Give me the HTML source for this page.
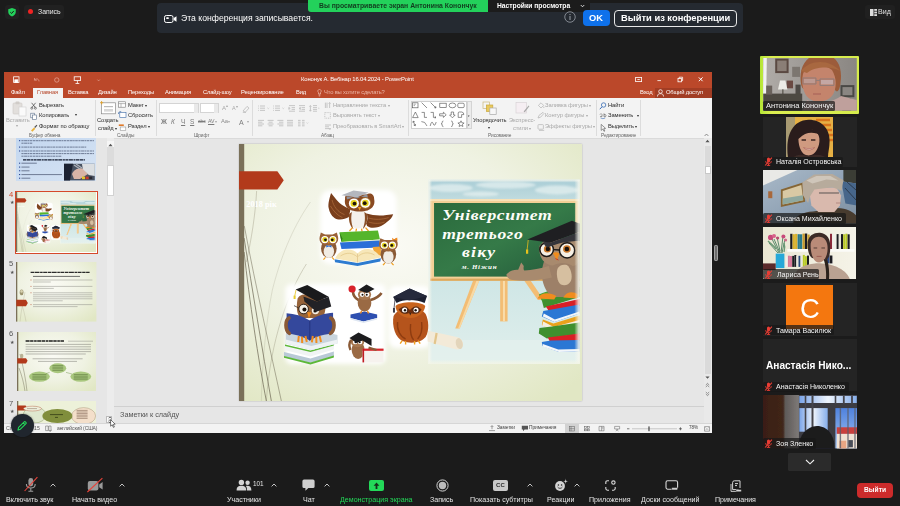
<!DOCTYPE html>
<html lang="ru">
<head>
<meta charset="utf-8">
<title>Zoom</title>
<style>
*{box-sizing:border-box;margin:0;padding:0}
html,body{width:900px;height:506px;overflow:hidden;background:#1b1b1b}
body{position:relative;font-family:"Liberation Sans",sans-serif;color:#fff}
.a{position:absolute}
.t{position:absolute;white-space:nowrap;line-height:1;will-change:transform}
/* zoom top */
#shield{left:5px;top:5px;width:14px;height:14px;border-radius:3px;background:#212121}
#rec{left:24px;top:5px;width:40.4px;height:14px;border-radius:3px;background:#212121}
#banner{left:157px;top:3px;width:586px;height:30px;border-radius:4px;background:#252a31}
#green{left:308px;top:0;width:180px;height:12px;background:#23d15b;border-radius:0 0 0 3px}
#sett{left:488px;top:0;width:102px;height:12px;background:#1c1c1c;border-radius:0 0 3px 0}
#ok{left:583px;top:10px;width:27px;height:16px;border-radius:4px;background:#0e71eb}
#leave{left:614px;top:10px;width:123px;height:16.5px;border-radius:4px;border:1px solid #e8e8e8}
/* ppt */
#ppt{left:4px;top:72px;width:708px;height:361px;background:#e6e6e6;overflow:hidden}
#ppt .t{color:#444}
#title{left:0;top:0;width:708px;height:26px;background:#bb482a}
#ribbon{left:0;top:26px;width:708px;height:40.6px;background:#f3f3f3;border-bottom:.8px solid #dadada}
#hometab{left:28.5px;top:15.5px;width:30px;height:11px;background:#f3f3f3}
.tab{top:18.3px;font-size:5.8px;color:#fff!important;letter-spacing:-.16px}
.rl{font-size:5.8px;color:#2c2c2c!important;letter-spacing:-.1px}
.rg{font-size:5.8px;color:#a8a8a8!important;letter-spacing:-.1px}
.gl{font-size:4.8px;color:#666!important;top:62.2px;letter-spacing:-.1px}
.sep{top:28px;width:1px;height:36px;background:#dcdcdc}
</style>
</head>
<body>
<svg width="0" height="0" style="position:absolute">
<defs>
<radialGradient id="sbg" cx="45%" cy="40%" r="75%"><stop offset="0" stop-color="#fafaf4"/><stop offset=".55" stop-color="#eff2e2"/><stop offset="1" stop-color="#e1e7c4"/></radialGradient>
<linearGradient id="sky" x1="0" y1="0" x2="0" y2="1"><stop offset="0" stop-color="#a9cdd6"/><stop offset=".12" stop-color="#c3dde0"/><stop offset=".55" stop-color="#cfe6e6"/><stop offset="1" stop-color="#e0efec"/></linearGradient>
<linearGradient id="brd" x1="0" y1="0" x2="1" y2="1"><stop offset="0" stop-color="#2a6a3c"/><stop offset=".5" stop-color="#357a48"/><stop offset="1" stop-color="#23583a"/></linearGradient>
<filter id="bl2" x="-20%" y="-20%" width="140%" height="140%"><feGaussianBlur stdDeviation="2.2"/></filter>
<filter id="bl1" x="-20%" y="-20%" width="140%" height="140%"><feGaussianBlur stdDeviation=".9"/></filter>
<symbol id="slide" viewBox="0 0 342.6 257" preserveAspectRatio="none">
<rect width="342.6" height="257" fill="url(#sbg)"/>
<g transform="translate(-238.7,-144)">
<!-- grass lines -->
<g fill="none" stroke="#9a977f" stroke-width=".5" opacity=".8">
<path d="M306 264 C288 292 270 340 266 401"/>
<path d="M310 202 C296 222 282 250 272 290 C266 320 262 360 261 401" opacity=".6"/>
<path d="M256.3 191 C255 215 251 240 246 262"/>
</g>
<g fill="none" stroke="#6a6450" stroke-width=".7">
<path d="M243.8 238 C252 290 262 350 271 401"/>
<path d="M243.8 252 C249 300 258 360 266 401"/>
<path d="M244 226 C256 290 270 350 281 401" stroke-width=".5"/>
</g>
<rect x="238.7" y="144" width="5.2" height="257" fill="#7a7059"/>
<path d="M238.7 171.2 H277 L283.4 180.3 L277 189.4 H238.7 Z" fill="#b23a1b"/>
<text x="246" y="207.4" font-family="Liberation Serif,serif" font-weight="bold" font-size="8.3" fill="#fff">2018 рік</text>
<!-- white halos -->
<g fill="#fff" filter="url(#bl2)">
<rect x="320" y="190" width="76" height="74" rx="10"/>
<rect x="285" y="284" width="100" height="80" rx="6"/>
<rect x="388" y="286" width="42" height="62" rx="8"/>
</g>
<!-- TOP OWL GROUP -->
<g>
<path d="M330.6 193 C329 198 327.4 204 328.2 208 C329 212 330.6 215.6 334 218 C338 220.6 344 219.6 348.4 217 L350 209 C344 207 338 203 334.6 198 Z" fill="#7a3f1c"/>
<path d="M331.6 200 C333 206 337 212 344 214.6 M330 206 C333 211 337 215.6 342 217.6" stroke="#a8683a" stroke-width=".8" fill="none"/>
<path d="M366 213.6 C372 215.6 380 216 386 215 L392.6 214.2 C391.6 217.4 389.6 219.6 387 221.6 C384 224 381.6 226 378 227 C374 228 370 228.4 366.6 226 L365 222 Z" fill="#7a3f1c"/>
<path d="M368 218 C374 220 382 219.6 388 217.6 M368 222 C374 224 380 223.6 384 222" stroke="#a8683a" stroke-width=".8" fill="none"/>
<ellipse cx="357.6" cy="218.4" rx="9.4" ry="10.2" fill="#f4f1ec"/>
<path d="M348.6 214 C347.6 222 350.6 227.6 353 229 C350.4 223 350.4 217 351.4 212 Z M366.6 214 C367.6 222 364.6 227.6 362.2 229 C364.8 223 364.8 217 363.8 212 Z" fill="#8a4f27"/>
<path d="M344.6 199 C344 194 349 192.4 352 194.6 L366 194.4 C369 192.2 374 193.8 373.6 199 C375 205 372 211.4 359.2 211.6 C346.4 211.4 343.4 205 344.6 199 Z" fill="#8a4a22"/>
<circle cx="353.4" cy="203.4" r="5" fill="#fff"/><circle cx="364.8" cy="203" r="5" fill="#fff"/>
<circle cx="353.4" cy="203.4" r="3.3" fill="#e6d21e"/><circle cx="364.8" cy="203" r="3.3" fill="#e6d21e"/>
<circle cx="354" cy="203.6" r="1.9" fill="#20150c"/><circle cx="364.2" cy="203.2" r="1.9" fill="#20150c"/>
<circle cx="364.8" cy="203" r="5.2" fill="none" stroke="#caa84a" stroke-width=".5"/>
<path d="M357.4 207 L360.8 207 L359.1 210.4 Z" fill="#f0a020"/>
<path d="M341 195.2 L353 190.4 L368 192.4 L356.4 197.6 Z" fill="#b4b7be"/><path d="M346 196.2 L356.4 198.4 L366.6 194 L367.4 197.4 C361 196 352 197 346.4 199.6 Z" fill="#8f929b"/>
<path d="M352 227.6 l-3 3.4 M356 228.6 l-.6 3 M361 228.6 l.6 3 M365 227.6 l3 3.4" stroke="#f0a020" stroke-width="1.3"/>
<path d="M339 232.2 L377.4 230.6 L379.4 239.4 L341 242 Z" fill="#55b52b"/><path d="M339 232.2 L341 242 L342 238.6 Z" fill="#2f7d17"/><path d="M341 242 L379.4 239.4 L379.4 240.8 L341.4 243.4 Z" fill="#e9f2d8"/>
<path d="M339.4 242.6 L379 240.6 L379.4 247.4 L341 249 Z" fill="#2b6fd8"/>
<path d="M372 247 L380.4 246.6 L380.4 256 L374 254 Z" fill="#f0a63a"/>
<path d="M334 259.2 L357 263 L380.4 258.2 L379.8 261.6 L357 266 L334.6 262.2 Z" fill="#2d7bd0"/>
<path d="M334.6 258.6 C340 247.2 352 247.8 357 253.6 C362 246.8 374 246.8 380.2 257.4 L357 262.6 Z" fill="#f7e7b9"/>
<path d="M357 253.6 L357 262.6" stroke="#d8b87a" stroke-width=".6"/>
<path d="M340 256 C346 252 352 252.6 356.4 256.6 M374 255 C368 251.6 362 252.4 357.6 256.4" fill="none" stroke="#e3c98a" stroke-width=".8"/>
<!-- left small owl -->
<ellipse cx="328.4" cy="248.6" rx="7.8" ry="9.4" fill="#8a5a36"/><ellipse cx="328.4" cy="251.4" rx="5.2" ry="6.6" fill="#f1ece4"/>
<path d="M319.2 237 L320.4 232.6 L324.6 234.4 L332.2 234.4 L336.4 232.6 L337.6 237 C338.6 242 335 245.8 328.4 245.8 C321.8 245.8 318.2 242 319.2 237 Z" fill="#9a6238"/>
<circle cx="324.4" cy="239.6" r="3.6" fill="#fff"/><circle cx="332.4" cy="239.6" r="3.6" fill="#fff"/>
<circle cx="324.4" cy="239.6" r="2.5" fill="#e6d21e"/><circle cx="332.4" cy="239.6" r="2.5" fill="#e6d21e"/>
<circle cx="325" cy="239.8" r="1.4" fill="#1e140c"/><circle cx="331.8" cy="239.8" r="1.4" fill="#1e140c"/>
<path d="M327.4 241.8 h2 l-1 2.2 z" fill="#f0a020"/><path d="M325.8 245 l2.6 1 l2.6 -1 v2.4 l-2.6 -1 l-2.6 1 z" fill="#2b6fd8"/>
<path d="M325 257.4 l-2 2.2 M331.6 257.4 l2 2.2" stroke="#f0a020" stroke-width="1.2"/>
<!-- right small owl -->
<ellipse cx="387.8" cy="254" rx="7.8" ry="9.6" fill="#8a5a36"/><ellipse cx="387.8" cy="257" rx="5.2" ry="6.6" fill="#f1ece4"/>
<path d="M378.6 242.6 L379.8 238.2 L384 240 L391.6 240 L395.8 238.2 L397 242.6 C398 247.6 394.4 251.4 387.8 251.4 C381.2 251.4 377.6 247.6 378.6 242.6 Z" fill="#9a6238"/>
<circle cx="383.8" cy="245.2" r="3.6" fill="#fff"/><circle cx="391.8" cy="245.2" r="3.6" fill="#fff"/>
<circle cx="383.8" cy="245.2" r="2.5" fill="#e6d21e"/><circle cx="391.8" cy="245.2" r="2.5" fill="#e6d21e"/>
<circle cx="384.4" cy="245.4" r="1.4" fill="#1e140c"/><circle cx="391.2" cy="245.4" r="1.4" fill="#1e140c"/>
<path d="M386.8 247.4 h2 l-1 2.2 z" fill="#f0a020"/><path d="M393.4 239.6 l3.2 -2.2 l.4 3.4 z M394 239.4 l-2.6 -1.6 l.6 2.6 z" fill="#f08a20"/>
<path d="M384.4 263 l-2 2.2 M391 263 l2 2.2" stroke="#f0a020" stroke-width="1.2"/>
</g>
<g>
<rect x="428" y="179.7" width="150.6" height="184" fill="url(#sky)"/>
<g fill="#e4f0f0" opacity=".75" filter="url(#bl1)"><ellipse cx="450" cy="188" rx="22" ry="4"/><ellipse cx="505" cy="185" rx="30" ry="3.4"/><ellipse cx="556" cy="190" rx="22" ry="4.4"/><ellipse cx="480" cy="194" rx="18" ry="2.6"/></g>
<rect x="428" y="340" width="150.6" height="24" fill="#e6f1ee" opacity=".6"/>
<!-- easel legs -->
<path d="M472.6 280 L478.8 280 L459 328.4 L454.6 328.4 Z" fill="#f3bd74"/><path d="M476 280 L478.8 280 L459 328.4 L457.4 328.4 Z" fill="#f8d9a4"/>
<rect x="499.4" y="280" width="7.4" height="41.4" fill="#f3bd74"/><rect x="502.2" y="280" width="2" height="41.4" fill="#f9dcaa"/>
<path d="M523 280 L529.4 280 L543 300 L537 300 Z" fill="#f3bd74"/>
<!-- board -->
<rect x="429.4" y="199" width="149.2" height="81.8" fill="#f2cf96"/><rect x="429.4" y="199" width="149.2" height="2" fill="#f8e2b8"/><rect x="429.4" y="278.6" width="149.2" height="2.2" fill="#dca85e"/>
<rect x="433.4" y="203" width="141" height="73.6" fill="url(#brd)"/>
<g font-family="Liberation Serif,serif" font-weight="bold" font-style="italic" fill="#fdfdf8">
<text transform="translate(441.6,220.4) scale(1.13,1)" font-size="15.6" textLength="96.8" lengthAdjust="spacing">Університет</text>
<text transform="translate(441.6,239) scale(1.13,1)" font-size="15.6" textLength="71.2" lengthAdjust="spacing">третього</text>
<text transform="translate(461.4,257) scale(1.13,1)" font-size="15.6" textLength="29.2" lengthAdjust="spacing">віку</text>
<text transform="translate(461,268.8) scale(1.13,1)" font-size="6.2" textLength="30.8" lengthAdjust="spacing">м. Ніжин</text>
</g>
<!-- book stack -->
<g>
<path d="M540.6 299 L578.6 289 L578.6 297 L543 308 Z" fill="#3f8f2e"/><path d="M538 294.4 C548 290 566 286.4 578.6 287 L578.6 292 L541 300.4 Z" fill="#4aa235"/>
<path d="M545 306.4 L578.6 299 L578.6 306 L548.6 312 Z" fill="#d81f26"/>
<path d="M542.4 311 L578.6 304.6 L578.6 313.4 L553.6 322 L541 316.4 Z" fill="#2b77d4"/><path d="M543 313.4 L554 319.4 L578.6 311.4 L578.6 313.4 L553.6 322 L542 316.6 Z" fill="#f3f6fa"/>
<path d="M542 319.4 L552.6 323.4 L578.6 315.4 L578.6 322.6 L553 330.6 L541 325 Z" fill="#e9a21c"/><path d="M542.4 321.6 L553 327 L578.6 320 L578.6 322.6 L553 330.6 L541.4 325.4 Z" fill="#f6efe0"/>
<path d="M538.6 328 L551 326.6 L578.6 322.6 L578.6 334 L546 338.6 L538 333.6 Z" fill="#3f8f2e"/>
<path d="M547 337.4 L578.6 333.4 L578.6 340.4 L550 343.6 Z" fill="#d81f26"/>
<path d="M541 342 L550 340.6 L578.6 340 L578.6 351.6 L558 352 L541.6 346 Z" fill="#2b77d4"/><path d="M542 344 L557.4 349.4 L578.6 349 L578.6 351.6 L558 352 L541.6 346.6 Z" fill="#f3f6fa"/>
</g>
<!-- teacher owl -->
<g>
<path d="M543 262 C539 274 541 288 551 297 L578.6 297 L578.6 250 C566 246 549 250 543 262 Z" fill="#9d8068"/>
<path d="M557 268 C555 272 556 282 560 284.6 C564 286 568 285 570 281 C572 276 570 268 566 265 C562 264 559 265 557 268 Z" fill="#d6bfa0"/>
<path d="M505.6 274.6 C508 271 513 269.4 517.4 269.8 L520.4 262.6 L523 266 C522.6 268 522.6 269.6 523.6 270.6 C531 270 540 268.6 548 266 L551 277.6 C540 280.6 524 281.6 512 280 C508 279.4 506 277.4 505.6 274.6 Z" fill="#a88a6e"/>
<path d="M538.6 246 C537.6 256 542 264.6 552 265.6 C558 262 566 262 572 266 C576 266 578.6 262 578.6 256 L578.6 240 L546 238 Z" fill="#a88a6e"/>
<circle cx="545.8" cy="249.6" r="6.6" fill="#f6efe4"/><circle cx="566.2" cy="250.4" r="7.4" fill="#f6efe4"/>
<circle cx="546.6" cy="249" r="3.6" fill="#c8762a"/><circle cx="566" cy="249" r="3.8" fill="#c8762a"/>
<circle cx="547" cy="249" r="2.2" fill="#1a120c"/><circle cx="566" cy="249" r="2.3" fill="#1a120c"/>
<circle cx="545.8" cy="249.6" r="6.8" fill="none" stroke="#1e1a18" stroke-width="1.5"/><circle cx="566.2" cy="250.4" r="7.6" fill="none" stroke="#1e1a18" stroke-width="1.5"/>
<path d="M552.6 249.6 L558.6 250" stroke="#1e1a18" stroke-width="1.3"/>
<path d="M552 253 C554 251.6 557.4 252 558.6 253.6 L556 260.6 Z" fill="#f08c1e"/>
<path d="M554.6 258.6 l3 1.4" stroke="#c8281e" stroke-width=".8"/>
<path d="M526.6 239.6 L571 220.8 L578.6 223.4 L578.6 232 L549.4 242.8 Z" fill="#1f1f22"/><path d="M542.6 241.4 L549.4 242.8 L578.6 232 L578.6 241 C568 241 556 243 547 247.6 C544 246 542.6 244 542.6 241.4 Z" fill="#34343a"/>
<path d="M527.4 240 L526.2 251" stroke="#e4b91c" stroke-width=".8"/><path d="M525.2 249.6 h2.2 v4.2 h-2.2 z" fill="#e8c21c"/>
<path d="M536.6 298.6 C539.6 292.6 548 291.6 555.4 296 L553.4 299.4 Z M562.4 297.6 C565.4 291.6 572.4 291 577 294.6 L576 298.6 Z" fill="#f08c1e"/>
</g>
<linearGradient id="rfade" x1="0" y1="0" x2="1" y2="0"><stop offset="0" stop-color="#f6f7ee" stop-opacity="0"/><stop offset="1" stop-color="#f6f7ee" stop-opacity="1"/></linearGradient>
<rect x="573.4" y="179.7" width="5.4" height="184" fill="url(#rfade)"/>
<linearGradient id="lfade" x1="1" y1="0" x2="0" y2="0"><stop offset="0" stop-color="#f6f7ee" stop-opacity="0"/><stop offset="1" stop-color="#f6f7ee" stop-opacity="1"/></linearGradient>
<linearGradient id="tfade" x1="0" y1="1" x2="0" y2="0"><stop offset="0" stop-color="#f6f7ee" stop-opacity="0"/><stop offset="1" stop-color="#f6f7ee" stop-opacity="1"/></linearGradient>
<linearGradient id="bfade" x1="0" y1="0" x2="0" y2="1"><stop offset="0" stop-color="#f3f5e6" stop-opacity="0"/><stop offset="1" stop-color="#f3f5e6" stop-opacity="1"/></linearGradient>
<rect x="427.8" y="179.5" width="3.6" height="184.4" fill="url(#lfade)"/>
<rect x="427.8" y="179.5" width="151" height="3.2" fill="url(#tfade)"/>
<rect x="427.8" y="359.6" width="151" height="4.3" fill="url(#bfade)"/>
<!-- scroll -->
<g><path d="M426.6 330.4 L456 337 C461 338 463 342 462 346 C461 349 457 350 454 349 L427 341.6 Z" fill="#f3ead8"/><ellipse cx="458.6" cy="343.6" rx="3.4" ry="5.6" transform="rotate(-14 458.6 343.6)" fill="#e3d5bb"/><path d="M436 333 L434 344" stroke="#e2c58c" stroke-width="2.2"/></g>
</g>
<!--OWLS2-->
<g>
<!-- reading owl -->
<path d="M283.6 352 L310 358.6 L333.4 351.6 L333.4 356 L310 363 L283.6 356.4 Z" fill="#b9c9d6"/><path d="M283.6 356 L310 362.6 L333.4 355.6 L333.4 357.4 L310 364.4 L283.6 357.8 Z" fill="#5cb838"/>
<path d="M284.6 345.6 L310 351.6 L333.4 345 L333.4 349.6 L310 356.4 L284.6 350.2 Z" fill="#f1f4f4"/><path d="M284.6 344.4 L310 350.4 L333.4 343.8 L333.4 345.4 L310 352 L284.6 346 Z" fill="#5cb838"/>
<path d="M285.4 334 L312 329 L337 335 L337 343.6 L311 350 L285.4 343.4 Z" fill="#c9d5dd"/><path d="M285.4 339.6 L311 346 L337 339.6 L337 343.6 L311 350 L285.4 343.4 Z" fill="#eef2f4"/>
<path d="M297 300 C297 296 302 294 308 294 L322 298 C326 302 326 312 322 318 L300 318 C296 314 296 306 297 300 Z" fill="#96633a"/>
<circle cx="303.2" cy="309" r="4.6" fill="#f4efe6"/><circle cx="304" cy="309.4" r="2" fill="#1a120c"/>
<circle cx="303.2" cy="309" r="4.8" fill="none" stroke="#2a2018" stroke-width=".9"/><path d="M298.4 308 L293.6 305.6" stroke="#2a2018" stroke-width=".7"/>
<circle cx="315" cy="310.6" r="3.6" fill="#f4efe6"/><circle cx="314.6" cy="311" r="1.6" fill="#1a120c"/>
<path d="M306.8 312 L311 312.6 L308.4 318.4 Z" fill="#f08c1e"/>
<path d="M286.2 313.2 C294 313.6 302 316 309.4 320.6 C316 315.6 325 313.2 332.6 312.8 L332.6 333.6 C325 334 316 336.4 309.4 340.6 C302 336.4 294 334 286.2 333.6 Z" fill="#34489c"/>
<path d="M309.4 320.6 L309.4 340.6" stroke="#22327a" stroke-width=".9"/>
<path d="M288.6 318 C284.6 320 284.4 330 289 333.4 M330.2 318 C334.6 320 334.8 330 330 333.4" stroke="#8a5a36" stroke-width="3.6" fill="none" stroke-linecap="round"/>
<path d="M295.2 289.6 L306.8 285 L328.2 296.8 L316.6 301.6 Z" fill="#1a1a1c"/><path d="M303 296.4 L316.6 301.6 L328.2 296.8 L330.8 306.4 L315.8 311.8 L304 301.6 Z" fill="#222226"/>
<path d="M295.6 290 L294.2 296.6" stroke="#e4c21c" stroke-width=".8"/><rect x="293.2" y="295.6" width="2" height="3.4" fill="#e8cc2a"/>
<path d="M298.4 336 l-.6 6 M301.6 336.6 l.2 6.4 M305 336 l1.4 6 M312.4 336 l-1 6.4 M315.8 336.6 l.2 6.4 M319.2 336 l1.4 6" stroke="#f08c1e" stroke-width="2"/>
<!-- apple owl -->
<path d="M350 314.6 L364 311.6 L376.6 314.6 L376.6 318 L363 321.6 L350 318 Z" fill="#2d4fb0"/><path d="M350 318 L363 321.6 L376.6 318 L376.6 319.4 L363 323 L350 319.4 Z" fill="#dfe7f2"/>
<ellipse cx="364" cy="303" rx="6.8" ry="8.6" fill="#9a6a44"/><ellipse cx="364" cy="294.6" rx="6.6" ry="5.4" fill="#a87850"/>
<path d="M358 300 C354 298 352.6 294 352.4 291.4 M370 300 C375 298.6 379 296 381 293" stroke="#8a5a36" stroke-width="2.6" fill="none"/>
<circle cx="361.6" cy="294.6" r="2.3" fill="#fff"/><circle cx="366.6" cy="294.6" r="2.3" fill="#fff"/><circle cx="362" cy="294.8" r="1" fill="#1a120c"/><circle cx="366.2" cy="294.8" r="1" fill="#1a120c"/>
<path d="M357.6 290 L366 284.6 L374 289 L366.4 293 Z" fill="#1c1c1e"/>
<circle cx="351.6" cy="289" r="3.6" fill="#d8222a"/>
<path d="M361 311 l-1 2.4 M367 311 l1 2.4" stroke="#f08c1e" stroke-width="1.4"/>
<!-- writing owl -->
<ellipse cx="357.6" cy="350" rx="6.4" ry="9" fill="#9a6a44"/><ellipse cx="357" cy="341.6" rx="6.8" ry="5.6" fill="#a87850"/>
<circle cx="354.6" cy="342" r="2.3" fill="#fff"/><circle cx="359.6" cy="342" r="2.3" fill="#fff"/><circle cx="355" cy="342.2" r="1" fill="#1a120c"/><circle cx="359.2" cy="342.2" r="1" fill="#1a120c"/>
<path d="M349 338 L358 332.4 L371 339 L371 346 L362 340.6 L356 343 Z" fill="#1c1c1e"/>
<path d="M350.6 340 C348.6 343 348.6 347 350 350" stroke="#8a5a36" stroke-width="2.4" fill="none"/>
<rect x="362" y="349" width="21" height="13.4" fill="#f6f2ee"/><rect x="362" y="348.6" width="21" height="2.2" fill="#d8222a"/><rect x="362" y="349" width="1.6" height="13.4" fill="#c01c22"/>
<path d="M368 347.6 L376 350" stroke="#8a5a36" stroke-width="2.2"/>
<!-- fluffy owl -->
<path d="M393 316 C391 326 395 338 402 341 C410 344 420 343 425 337 C429 330 428 320 425 314 C420 306 398 306 393 316 Z" fill="#b5541c"/>
<path d="M397 322 C396 330 400 337 405 339 M410 324 C409 332 411 338 413 340 M421 322 C422 330 420 336 417 339" stroke="#8e3c10" stroke-width="1.4" fill="none"/>
<path d="M395 306 C395 312 401 318 410 318 C418 318 424 312 424.6 306 C420 301 400 301 395 306 Z" fill="#c8641e"/>
<path d="M398 309.6 C401 306 406 306 409.4 310 C412 306 418 306 421 309.6 C419 314 412 315 409.6 312.6 C406 315 400 314 398 309.6 Z" fill="#6e2c0c"/>
<circle cx="404" cy="310" r="2.6" fill="#fff"/><circle cx="415.4" cy="310" r="2.6" fill="#fff"/><circle cx="404.4" cy="310.2" r="1.2" fill="#1a120c"/><circle cx="415" cy="310.2" r="1.2" fill="#1a120c"/>
<circle cx="404" cy="310" r="3.4" fill="none" stroke="#3a2a20" stroke-width=".6"/><circle cx="415.4" cy="310" r="3.4" fill="none" stroke="#3a2a20" stroke-width=".6"/>
<path d="M408.4 312.6 h2.6 l-1.3 3 z" fill="#3a2418"/>
<path d="M392.6 297 L409 288.6 L426.4 296 L424 303 C416 299 402 299 396 303 Z" fill="#1c2030"/><path d="M392.6 297 L409 300.6 L426.4 296 L409 288.6 Z" fill="#262a3c"/>
<path d="M394.6 297.6 L393.4 309" stroke="#3a3a48" stroke-width=".8"/><rect x="392.4" y="308" width="2" height="4.6" fill="#3a3a48"/>
<path d="M401.6 340.6 l-2 3 M405 341 l0 3.4 M414 341 l0 3.4 M417.6 340.6 l2 3" stroke="#f0a020" stroke-width="1.4"/>
</g>
</g>
</symbol>
</defs>
</svg>
<!-- ZOOM TOP BAR -->
<div class="a" id="shield"></div>
<svg class="a" style="left:8px;top:8px" width="8" height="8.5" viewBox="0 0 16 17"><path d="M8 0 L15.5 2.6 V8 C15.5 12.5 12 15.6 8 17 C4 15.6 .5 12.5 .5 8 V2.6 Z" fill="#23d15b"/><path d="M4.6 8.4 L7.2 10.9 L11.6 5.9" fill="none" stroke="#1b1b1b" stroke-width="2"/></svg>
<div class="a" id="rec"></div>
<div class="a" style="left:28.1px;top:9.3px;width:5.1px;height:5.1px;border-radius:50%;background:#f02323"></div>
<div class="t" style="left:37.5px;top:8.5px;font-size:6.9px;color:#e8e8e8">Запись</div>

<div class="a" id="banner"></div>
<svg class="a" style="left:164px;top:14.5px" width="13" height="8" viewBox="0 0 26 16"><rect x="1" y="1" width="17" height="14" rx="3.5" fill="none" stroke="#fff" stroke-width="2"/><path d="M19.5 6 L25 2.5 V13.5 L19.5 10 Z" fill="#fff"/><rect x="4.5" y="4.5" width="5" height="3.4" rx="1" fill="#fff"/></svg>
<div class="t" style="left:180.5px;top:13.9px;font-size:8.66px;color:#fff">Эта конференция записывается.</div>
<div class="a" id="green"></div>
<div class="t" style="left:318.5px;top:2.9px;font-size:6.83px;font-weight:bold;color:#123b1e">Вы просматриваете экран Антонина Конончук</div>
<div class="a" id="sett"></div>
<div class="t" style="left:496.5px;top:2.9px;font-size:6.73px;font-weight:bold;color:#fff">Настройки просмотра</div>
<svg class="a" style="left:580px;top:4.2px" width="5" height="4" viewBox="0 0 10 8"><path d="M1.5 2 L5 5.6 L8.5 2" fill="none" stroke="#fff" stroke-width="1.6"/></svg>
<svg class="a" style="left:564px;top:11.3px" width="12" height="12" viewBox="0 0 24 24"><circle cx="12" cy="12" r="10.5" fill="none" stroke="#9aa0a8" stroke-width="1.6"/><rect x="11" y="10" width="2" height="8" fill="#9aa0a8"/><rect x="11" y="6" width="2" height="2.2" fill="#9aa0a8"/></svg>
<div class="a" id="ok"></div>
<div class="t" style="left:589px;top:14.4px;font-size:9.3px;font-weight:bold;color:#fff">OK</div>
<div class="a" id="leave"></div>
<div class="t" style="left:620.5px;top:14.3px;font-size:9.36px;font-weight:bold;color:#fff">Выйти из конференции</div>
<div class="a" style="left:865px;top:4.6px;width:30px;height:14px;border-radius:3px;background:#202020"></div><svg class="a" style="left:870px;top:8.5px" width="7" height="7" viewBox="0 0 14 14"><rect x="0" y="0" width="7" height="14" fill="#ddd"/><rect x="8.5" y="0" width="5.5" height="3.6" fill="#ddd"/><rect x="8.5" y="5.2" width="5.5" height="3.6" fill="#ddd"/><rect x="8.5" y="10.4" width="5.5" height="3.6" fill="#ddd"/></svg>
<div class="t" style="left:878.3px;top:8.5px;font-size:7.1px;color:#e0e0e0">Вид</div>

<!-- POWERPOINT WINDOW -->
<div class="a" id="ppt">
<div class="a" id="title"></div>
<div class="a" id="hometab"></div>
<div class="a" id="ribbon"></div>
<!--TABS-->
<svg class="a" style="left:9px;top:3.5px" width="100" height="9" viewBox="0 0 100 9">
<g fill="none" stroke="#fff" stroke-width=".8"><rect x=".6" y=".8" width="5.4" height="5.6"/><rect x="1.8" y="3.8" width="3" height="2.6" fill="#fff"/></g>
<path d="M21.5 4.2 C23 2.2 26 2.6 26 5.4 M21.5 4.2 L21.5 2 M21.5 4.2 L23.8 4.2" fill="none" stroke="#e2a090" stroke-width=".8"/>
<circle cx="43.8" cy="4" r="2.2" fill="none" stroke="#e2a090" stroke-width=".8"/>
<g fill="none" stroke="#fff" stroke-width=".8"><rect x="61.2" y=".8" width="6.4" height="3.6"/><path d="M64.4 4.4 V7.5 M62.5 7.5 H66.3"/></g>
<path d="M84.4 3.6 L85.6 4.9 L86.8 3.6" fill="none" stroke="#e7b3a5" stroke-width=".6"/>
</svg>
<div class="t" style="left:296.8px;top:5.2px;font-size:5.9px;color:#fff!important;letter-spacing:-.15px">Кононук А. Вебінар 16.04.2024 - PowerPoint</div>
<svg class="a" style="left:630px;top:3px" width="74" height="10" viewBox="0 0 74 10">
<g fill="none" stroke="#fff" stroke-width=".8"><rect x="1.6" y="2.4" width="6" height="4.2"/><path d="M3.4 4.5 H5.8"/><path d="M23.4 5.6 H27"/><rect x="44" y="3.4" width="3.4" height="3.4"/><path d="M45.2 3.4 V2.2 H48.6 V5.6 H47.4"/><path d="M64.8 2.4 L68.6 6.2 M68.6 2.4 L64.8 6.2" stroke-width="1"/></g>
</svg>
<div class="t tab" style="left:6.8px">Файл</div>
<div class="t tab" style="left:33.3px;color:#b7472a!important">Главная</div>
<div class="t tab" style="left:64px">Вставка</div>
<div class="t tab" style="left:94px">Дизайн</div>
<div class="t tab" style="left:124px">Переходы</div>
<div class="t tab" style="left:161px">Анимация</div>
<div class="t tab" style="left:198.7px">Слайд-шоу</div>
<div class="t tab" style="left:237px">Рецензирование</div>
<div class="t tab" style="left:292px">Вид</div>
<svg class="a" style="left:312.5px;top:16.5px" width="5" height="8" viewBox="0 0 10 16"><path d="M5 1 C1.6 1 .6 4.6 3 7.4 V10 H7 V7.4 C9.4 4.6 8.4 1 5 1 Z M3.2 12 H6.8 M3.6 14 H6.4" fill="none" stroke="#f3c9bd" stroke-width="1.3"/></svg>
<div class="t tab" style="left:320px;color:#eab5a6!important">Что вы хотите сделать?</div>
<div class="a" style="left:651px;top:15.5px;width:57px;height:10.5px;background:#a23d24"></div>
<div class="t tab" style="left:636px">Вход</div>
<svg class="a" style="left:653px;top:16.8px" width="7" height="8" viewBox="0 0 14 16"><circle cx="7" cy="5" r="3.6" fill="none" stroke="#fff" stroke-width="1.5"/><path d="M1 15 C1 10 4 9.4 7 9.4 C10 9.4 13 10 13 15" fill="none" stroke="#fff" stroke-width="1.5"/></svg>
<div class="t tab" style="left:662px">Общий доступ</div>
<!--RIBBON-->
<!-- clipboard -->
<svg class="a" style="left:7px;top:28px" width="18" height="17" viewBox="0 0 18 17"><rect x="2" y="3" width="9" height="11" rx="1" fill="#e2dfdc" stroke="#cfcac6" stroke-width=".6"/><rect x="4.5" y="1.6" width="4" height="2.6" rx=".8" fill="#d0ccc8"/><rect x="8" y="7" width="7" height="9" fill="#fafafa" stroke="#d0d0d0" stroke-width=".6"/></svg>
<div class="t rg" style="left:2.2px;top:46px">Вставить</div>
<div class="t rg" style="left:11.5px;top:52px;font-size:4px">▾</div>
<svg class="a" style="left:25.6px;top:29.5px" width="8" height="36" viewBox="0 0 8 36">
<path d="M1.6 .8 L5.4 5.6 M5.6 .8 L1.8 5.6" stroke="#444" stroke-width=".7" fill="none"/><circle cx="1.8" cy="6.2" r="1" fill="none" stroke="#444" stroke-width=".6"/><circle cx="5.4" cy="6.2" r="1" fill="none" stroke="#444" stroke-width=".6"/>
<rect x=".8" y="11.2" width="3.8" height="4.6" fill="#fff" stroke="#5a6f8a" stroke-width=".6"/><rect x="2.6" y="13" width="3.8" height="4.6" fill="#fff" stroke="#5a6f8a" stroke-width=".6"/>
<g transform="translate(0,1.4)"><path d="M1 27 L4 24 L5.4 25.4 L2.4 28.4 Z" fill="#e9b23c"/><path d="M4.2 23.6 L6.6 21.4 L7.4 22.2 L5.2 24.6 Z" fill="#555"/></g>
</svg>
<div class="t rl" style="left:34.8px;top:30.7px">Вырезать</div>
<div class="t rl" style="left:34.8px;top:40.6px">Копировать</div>
<div class="t rl" style="left:70.5px;top:41.4px;font-size:4px">▾</div>
<div class="t rl" style="left:34.8px;top:51.9px">Формат по образцу</div>
<div class="t gl" style="left:24.8px">Буфер обмена</div>
<div class="a sep" style="left:90.6px"></div>
<!-- slides -->
<svg class="a" style="left:95.5px;top:28.5px" width="17" height="14" viewBox="0 0 17 14"><rect x="1.5" y="1.8" width="14" height="11" fill="#fff" stroke="#8a8a8a" stroke-width=".7"/><rect x="4" y="5" width="9" height="1.2" fill="#bbb"/><rect x="4" y="8" width="9" height="2.6" fill="#d8d8d8"/><path d="M1.6 0 V3.4 M0 1.7 H3.3" stroke="#e0a22a" stroke-width=".9"/></svg>
<div class="t rl" style="left:92.6px;top:46px">Создать</div>
<div class="t rl" style="left:94.4px;top:53.6px">слайд <span style="font-size:4px">▾</span></div>
<svg class="a" style="left:114.2px;top:29px" width="9" height="34" viewBox="0 0 9 34">
<rect x=".6" y=".8" width="7" height="5.4" fill="#fff" stroke="#777" stroke-width=".6"/><path d="M.6 2.6 H7.6 M3 2.6 V6.2" stroke="#777" stroke-width=".5"/>
<rect x="1.8" y="11.6" width="6.2" height="4.8" fill="#fff" stroke="#3c6aa8" stroke-width=".6"/><path d="M.4 13 C.4 11 1.6 10.4 3.2 10.6" stroke="#3c6aa8" stroke-width=".7" fill="none"/>
<g transform="translate(0,1.4)"><rect x=".8" y="22" width="5" height="1.6" fill="#e07a2a"/><rect x="2.2" y="24.6" width="5.6" height="3.6" fill="#fff" stroke="#888" stroke-width=".5"/></g>
</svg>
<div class="t rl" style="left:123.6px;top:30.7px">Макет <span style="font-size:4px">▾</span></div>
<div class="t rl" style="left:123.6px;top:40.6px">Сбросить</div>
<div class="t rl" style="left:123.6px;top:51.9px">Раздел <span style="font-size:4px">▾</span></div>
<div class="t gl" style="left:112.8px">Слайды</div>
<div class="a sep" style="left:152px"></div>
<!-- font -->
<div class="a" style="left:154.6px;top:31.4px;width:40.4px;height:9.8px;background:#fff;border:.6px solid #d4d4d4"></div>
<div class="a" style="left:190px;top:32px;width:4.4px;height:8.6px;background:#e9e9e9"></div>
<div class="a" style="left:196px;top:31.4px;width:19px;height:9.8px;background:#fff;border:.6px solid #d4d4d4"></div>
<div class="a" style="left:210px;top:32px;width:4.4px;height:8.6px;background:#e9e9e9"></div>
<div class="t rg" style="left:218px;top:33.4px;font-size:6px">A<span style="font-size:3.6px;vertical-align:top">▴</span></div>
<div class="t rg" style="left:228px;top:34px;font-size:5.4px">A<span style="font-size:3.6px;vertical-align:top">▾</span></div>
<div class="t rg" style="left:156.8px;top:47px;font-size:6.5px;color:#7c7c7c!important;font-weight:bold">Ж</div>
<div class="t rg" style="left:167px;top:47px;font-size:6.5px;color:#7c7c7c!important;font-style:italic">К</div>
<div class="t rg" style="left:176.6px;top:47px;font-size:6.5px;color:#7c7c7c!important;text-decoration:underline">Ч</div>
<div class="t rg" style="left:186px;top:47px;font-size:6.5px;color:#7c7c7c!important;text-decoration:underline">S</div>
<div class="t rg" style="left:193.6px;top:48.4px;font-size:4.8px;color:#7c7c7c!important;text-decoration:line-through">abc</div>
<div class="t rg" style="left:203.6px;top:47.4px;font-size:5.2px;color:#7c7c7c!important;text-decoration:underline">AV</div>
<div class="t rg" style="left:211.4px;top:48.6px;font-size:3.6px">▾</div>
<div class="t rg" style="left:216.6px;top:47.2px;font-size:5.8px;color:#8c8c8c!important">Aa</div>
<div class="t rg" style="left:224.4px;top:48.6px;font-size:3.6px">▾</div>
<div class="t rg" style="left:234.6px;top:46.6px;font-size:7px;color:#7c7c7c!important">A</div>
<div class="t rg" style="left:243px;top:48.6px;font-size:3.6px">▾</div>
<svg class="a" style="left:238px;top:33px" width="8" height="8" viewBox="0 0 8 8"><path d="M1 6 L5 1.4 L7 3 L3.4 7.2 Z M.8 7.4 H4" fill="none" stroke="#b5b5b5" stroke-width=".7"/></svg>
<div class="t gl" style="left:189.6px">Шрифт</div>
<div class="a sep" style="left:248px"></div>
<!-- paragraph -->
<svg class="a" style="left:252px;top:31px" width="64" height="26" viewBox="0 0 64 26" fill="none" stroke="#b3b3b3" stroke-width=".7">
<path d="M4 3 H9 M4 5.2 H9 M4 7.4 H9 M2 3 h.8 M2 5.2 h.8 M2 7.4 h.8"/><path d="M11.4 4.8 l.9 .9 l.9 -.9" stroke-width=".5"/>
<path d="M19 3 H24 M19 5.2 H24 M19 7.4 H24 M17 3 h.8 M17 5.2 h.8 M17 7.4 h.8"/><path d="M26.4 4.8 l.9 .9 l.9 -.9" stroke-width=".5"/>
<path d="M33 2.6 H39 M35.6 4.6 H39 M35.6 6.4 H39 M33 8.2 H39 M32.8 4.4 l1.4 1 l-1.4 1 z"/>
<path d="M43 2.6 H49 M45.6 4.6 H49 M45.6 6.4 H49 M43 8.2 H49 M44.4 4.4 l-1.4 1 l1.4 1 z"/>
<path d="M57 2.6 H61 M57 4.6 H61 M57 6.4 H61 M57 8.2 H61 M54.4 2.6 V8.2 M53.4 3.6 l1 -1 l1 1 M53.4 7.2 l1 1 l1 -1"/><path d="M62.2 4.8 l.8 .8 l.8 -.8" stroke-width=".5"/>
<path d="M2 17.4 H8 M2 19.2 H6.4 M2 21 H8 M2 22.8 H6.4"/>
<path d="M11.6 17.4 H17.6 M12.6 19.2 H16.6 M11.6 21 H17.6 M12.6 22.8 H16.6"/>
<path d="M21.4 17.4 H27.4 M23 19.2 H27.4 M21.4 21 H27.4 M23 22.8 H27.4"/>
<path d="M31 17.4 H37 M31 19.2 H37 M31 21 H37 M31 22.8 H37"/>
<path d="M42 17.4 H44.6 M42 19.2 H44.6 M42 21 H44.6 M42 22.8 H44.6 M46 17.4 H48.6 M46 19.2 H48.6 M46 21 H48.6 M46 22.8 H48.6"/><path d="M50.6 19.6 l.8 .8 l.8 -.8" stroke-width=".5"/>
</svg>
<svg class="a" style="left:320px;top:29.5px" width="8" height="32" viewBox="0 0 8 32" fill="none" stroke="#b3b3b3" stroke-width=".7"><path d="M1.4 .6 V6 M3 .6 V6 M5.6 .6 V6 M4.6 1.6 l1 -1 l1 1"/><rect x=".8" y="10.6" width="5.6" height="5.6" stroke-dasharray="1 .8"/><g transform="translate(0,1.4)"><path d="M1 21.6 H7 M1 23.4 H5 M1 25.2 H7 M5 25.2 l1.4 1.4"/></g></svg>
<div class="t rg" style="left:329.4px;top:30.7px">Направление текста <span style="font-size:4px">▾</span></div>
<div class="t rg" style="left:329.4px;top:40.6px">Выровнять текст <span style="font-size:4px">▾</span></div>
<div class="t rg" style="left:329.4px;top:51.9px">Преобразовать в SmartArt <span style="font-size:4px">▾</span></div>
<div class="t gl" style="left:317px">Абзац</div>
<div class="a sep" style="left:404px"></div>
<!-- drawing -->
<div class="a" style="left:406.6px;top:28.6px;width:56px;height:28.2px;background:#fff;border:.6px solid #cfcfcf"></div>
<div class="a" style="left:462.6px;top:28.6px;width:5.4px;height:28.2px;background:#ececec;border:.6px solid #d4d4d4"></div>
<svg class="a" style="left:407px;top:29px" width="56" height="28" viewBox="0 0 56 28" fill="none" stroke="#555" stroke-width=".65">
<rect x="1.6" y="1.8" width="5.4" height="5"/><path d="M2.6 3.2 h2.2 M2.6 4.6 h1.4" stroke-width=".5"/>
<path d="M10.6 1.6 L16 7"/><path d="M19.6 1.6 L25 7 M25 7 l-1.8 -.4 M25 7 l-.4 -1.8"/>
<rect x="28.8" y="2.2" width="6.4" height="4.4"/><ellipse cx="41.4" cy="4.4" rx="3.4" ry="2.4"/><rect x="46.8" y="2.2" width="6.4" height="4.4" rx="1.2"/>
<path d="M1.6 16.6 L4.4 11 L7.2 16.6 Z"/><path d="M10.6 11.4 H13.4 V16.4 H16"/><path d="M19.6 11.4 H22.4 V16.4 H25 m0 0 l-1.2 -1 m1.2 1 l-1.2 1"/>
<path d="M28.6 12.8 H32.4 V11.2 L35.2 13.8 L32.4 16.4 V14.8 H28.6 Z"/><path d="M40.2 11 V14 H38.6 L41.4 16.8 L44.2 14 H42.6 V11 Z"/><path d="M47.2 16.4 V12 Q47.2 11 48.4 11 H50.8 Q53 11.4 52.8 13.6 H50.6 V16.4 Z"/>
<path d="M2.2 20.2 l2 4.6 m0 0 l-1.6 -.8 m1.6 .8 l.4 -1.8 M2.2 20.2 l1.6 .6 M2.2 20.2 l-.2 1.6"/><path d="M10.4 20.6 Q14 20 16 25"/><path d="M19.2 25 Q20.6 19 22.2 22.6 Q23.6 26.6 25.2 21"/>
<path d="M32.4 20 Q31 20 31.2 21.4 Q31.4 22.6 30.2 22.8 Q31.4 23 31.2 24.2 Q31 25.6 32.4 25.6"/><path d="M40.2 20 Q41.6 20 41.4 21.4 Q41.2 22.6 42.4 22.8 Q41.2 23 41.4 24.2 Q41.6 25.6 40.2 25.6"/>
<path d="M50 19.8 l.9 2 l2.2 .2 l-1.7 1.4 l.5 2.1 l-1.9 -1.1 l-1.9 1.1 l.5 -2.1 l-1.7 -1.4 l2.2 -.2 z"/>
</svg>
<div class="t rl" style="left:463.8px;top:42.6px;font-size:3.4px">▾</div>
<div class="t rl" style="left:463.8px;top:51.6px;font-size:3.4px">▾</div>
<svg class="a" style="left:478.4px;top:28.6px" width="15" height="14" viewBox="0 0 15 14"><rect x="1" y="1" width="6.4" height="6.4" fill="#f4f4f4" stroke="#c9b77a" stroke-width=".7"/><rect x="4.4" y="4" width="6.4" height="6.4" fill="#e9c95c" stroke="#c8a73c" stroke-width=".7"/><rect x="7.8" y="7" width="6.4" height="6.4" fill="#f7f7f7" stroke="#a9a9a9" stroke-width=".7"/></svg>
<div class="t rl" style="left:468.6px;top:46px">Упорядочить</div>
<div class="t rl" style="left:484px;top:53.6px;font-size:4px">▾</div>
<svg class="a" style="left:511.4px;top:28.6px" width="15" height="14" viewBox="0 0 15 14"><rect x="1" y="1.4" width="10.6" height="10.6" fill="#f5eef2" stroke="#d9d3d6" stroke-width=".7"/><path d="M8.6 10.6 L13.6 4.4 L14.4 5.2 L9.8 11.2 Z" fill="#a8a8a8"/></svg>
<div class="t rg" style="left:505.2px;top:46px">Экспресс-</div>
<div class="t rg" style="left:509.4px;top:53.6px">стили <span style="font-size:4px">▾</span></div>
<svg class="a" style="left:532.6px;top:29.5px" width="8" height="32" viewBox="0 0 8 32" fill="none" stroke="#b3b3b3" stroke-width=".7"><path d="M1.4 3.4 L4 .8 L6.6 3.4 L4 6 Z M6.8 4.6 v1.4"/><path d="M1 16 L2 13.4 L6 10.4 L7 11.4 L3.6 15.2 Z"/><g transform="translate(0,1.2)"><rect x="1" y="21.4" width="5.4" height="4.6" rx=".8"/><path d="M2 27.2 H7.2"/></g></svg>
<div class="t rg" style="left:541.2px;top:30.7px">Заливка фигуры <span style="font-size:4px">▾</span></div>
<div class="t rg" style="left:541.2px;top:40.6px">Контур фигуры <span style="font-size:4px">▾</span></div>
<div class="t rg" style="left:541.2px;top:51.9px">Эффекты фигуры <span style="font-size:4px">▾</span></div>
<div class="t gl" style="left:483.6px">Рисование</div>
<div class="a sep" style="left:592px"></div>
<!-- editing -->
<svg class="a" style="left:595.4px;top:29.5px" width="8" height="32" viewBox="0 0 8 32" fill="none" stroke="#3a6db5" stroke-width=".8"><circle cx="4.6" cy="3" r="2.2"/><path d="M3 4.8 L.8 7.2" stroke-width="1"/><path d="M1 14.6 h2 M1 12.6 q1 -2 2 0 v2 M5 11.4 v3.4 q2 .4 2 -1.2 q0 -1.4 -2 -1" stroke="#555" stroke-width=".6"/><path d="M1.6 16 q2.4 1.4 4.6 0" stroke-width=".6"/><g transform="translate(0,1.4)"><path d="M2.2 21 V27 L3.8 25.6 L5 28 L5.8 27.6 L4.8 25.2 L6.6 25 Z" stroke="#555" stroke-width=".6"/></g></svg>
<div class="t rl" style="left:604.2px;top:30.7px">Найти</div>
<div class="t rl" style="left:604.2px;top:40.6px">Заменить <span style="font-size:4px;padding-left:2px">▾</span></div>
<div class="t rl" style="left:604.2px;top:51.9px">Выделить <span style="font-size:4px">▾</span></div>
<div class="t gl" style="left:597px">Редактирование</div>
<div class="a sep" style="left:636px"></div>
<svg class="a" style="left:699.6px;top:60.6px" width="5" height="4" viewBox="0 0 5 4"><path d="M.6 3 L2.5 1 L4.4 3" fill="none" stroke="#666" stroke-width=".7"/></svg>
<!--THUMBS-->
<div class="a" style="left:0;top:66px;width:104px;height:285px;background:#e6e6e6"></div>
<div class="a" style="left:103px;top:66px;width:6.6px;height:285px;background:#ececec"></div><div class="a" style="left:103px;top:75px;width:6.6px;height:19px;background:#dcdcdc"></div><div class="a" style="left:103px;top:69px;width:6.6px;height:6.4px;background:#f6f6f6"></div>
<div class="a" style="left:103.4px;top:93.4px;width:6.2px;height:30.6px;background:#fff;border:.5px solid #d2d2d2"></div>
<svg class="a" style="left:104px;top:70.6px" width="5" height="4" viewBox="0 0 5 4"><path d="M.4 3.2 L2.5 .8 L4.6 3.2 Z" fill="#555"/></svg>
<div class="a" style="left:102.4px;top:344px;width:5.6px;height:7.2px;background:#fbfbfb;border:.5px solid #bbb"></div>
<svg class="a" style="left:103.6px;top:345px" width="4" height="6" viewBox="0 0 4 6"><path d="M.6 1.2 L2 .2 L3.4 1.2 M.6 3.2 h2.8 M.6 4.6 L2 5.8 L3.4 4.6" stroke="#333" stroke-width=".7" fill="none"/></svg>
<!-- thumb 3 -->
<svg class="a" style="left:12.2px;top:66px" width="80" height="43.2" viewBox="0 0 80 43.2">
<defs><linearGradient id="t3" x1="0" y1="0" x2="1" y2="1"><stop offset="0" stop-color="#c3d7f0"/><stop offset="1" stop-color="#d6e3f3"/></linearGradient></defs>
<rect width="80" height="43.2" fill="url(#t3)"/>
<path d="M5.4 2.7H78.0M5.4 5.2H16.3M5.4 9.1H70.7M5.4 13H78.0M5.4 15.6H78.0M5.4 18.2H45.3" stroke="#46526e" stroke-width="0.7" fill="none" stroke-dasharray="2.2 .5 3 .4 1.6 .5 2.6 .6"/><path d="M7 21.9H69.0" stroke="#141c30" stroke-width="1.1" fill="none" stroke-dasharray="3 .5 4 .6 2 .5"/><path d="M5.4 25.2H20.8M5.4 29.1H13.5M5.4 32.8H13.5M5.4 36.6H46.0M5.4 40.2H14.3" stroke="#46526e" stroke-width="0.7" fill="none"/>
<path d="M3 2.7h1.2M3 9.1h1.2M3 13h1.2M3 25.2h1.2M3 29.1h1.2M3 32.8h1.2M3 36.6h1.2M3 40.2h1.2" stroke="#1e3a8a" stroke-width="1"/>
<g filter="url(#pb)"><rect x="48" y="25.8" width="30.8" height="16.6" fill="#4a5262"/><path d="M48 25.8 h9 l-3 16.6 h-6 z" fill="#1e2430"/><path d="M56 36 C58 31 64 29 68 31 L72 36 L64 41 L58 41 Z" fill="#d8b4a6"/><path d="M66 26 h12.8 v12 l-6 -1 l-6 -6 z" fill="#dcdfe2"/><path d="M58 27 L64 31 M60 26 L66 30" stroke="#aeb4bc" stroke-width="1.2"/><rect x="66" y="38.6" width="3" height="2.6" fill="#e4c42a"/><rect x="69.6" y="38.6" width="3" height="2.6" fill="#c8382a"/><rect x="73.2" y="38.6" width="3" height="2.6" fill="#2a2a30"/></g>
</svg>
<!-- thumb 4 selected -->
<div class="t" style="left:5.4px;top:118.6px;font-size:7.6px;color:#d24726!important">4</div>
<div class="t" style="left:5.6px;top:129px;font-size:4.6px;color:#555!important">★</div>
<div class="a" style="left:11px;top:119px;width:82.8px;height:62.6px;border:1.1px solid #d5492a;background:#fff"></div>
<svg class="a" style="left:12.4px;top:120.3px" width="80" height="60"><use href="#slide" width="80" height="60"/></svg>
<!-- thumb 5 -->
<div class="t" style="left:5.4px;top:188.2px;font-size:7.6px;color:#555!important">5</div>
<div class="t" style="left:5.6px;top:198.6px;font-size:4.6px;color:#555!important">★</div>
<svg class="a" style="left:12.2px;top:190.1px" width="80.4" height="59.6" viewBox="0 0 80.4 59.6">
<rect width="80.4" height="59.6" fill="url(#sbg)"/><rect width="1.3" height="59.6" fill="#7a7059"/>
<path d="M5 40 C7 46 9 53 10 59.6 M9 30 C7 40 5 50 4 59.6" stroke="#b9b59c" stroke-width=".4" fill="none"/>
<ellipse cx="5.6" cy="30.4" rx="1.9" ry="2.8" fill="#9c9470"/><ellipse cx="5.6" cy="29.4" rx="1.3" ry="1.3" fill="#d8d2b0"/>
<path d="M.3 37.8 H10 L11.8 41 L10 44.2 H.3 Z" fill="#b23a1b"/>
<path d="M14.6 10.4H73.6" stroke="#2a2a2a" stroke-width="1.3" fill="none" stroke-dasharray="3.4 .5 5 .6 2.6 .5 4 .6"/><path d="M17 14.4H64.0" stroke="#4a4a4a" stroke-width="0.8" fill="none"/><path d="M17 18H76.4M17 20H34.8M17 24.4H76.4M17 26.4H37.8M17 30.8H76.4M17 32.8H76.4M17 34.8H76.4M17 36.8H76.4M17 38.8H46.7M17 42.6H76.4M17 44.6H61.6" stroke="#8e8e88" stroke-width="0.5" fill="none"/>
<path d="M14.6 18h.8M14.6 24.4h.8M14.6 30.8h.8M14.6 42.6h.8" stroke="#b23a1b" stroke-width=".8"/>
</svg>
<!-- thumb 6 -->
<div class="t" style="left:5.4px;top:258.4px;font-size:7.6px;color:#555!important">6</div>
<div class="t" style="left:5.6px;top:268.8px;font-size:4.6px;color:#555!important">★</div>
<svg class="a" style="left:12.6px;top:260px" width="79.8" height="59.4" viewBox="0 0 79.8 59.4">
<rect width="79.8" height="59.4" fill="url(#sbg)"/><rect width="1.3" height="59.4" fill="#7a7059"/>
<path d="M3 22 C6 34 9 48 10 59.4 M2 36 C5 44 7 52 8 59.4" stroke="#6f6c54" stroke-width=".45" fill="none"/>
<ellipse cx="4.8" cy="24" rx="1.6" ry="2.2" fill="#b9b394"/>
<path d="M.3 26.2 H9 L10.6 28.8 L9 31.4 H.3 Z" fill="#b23a1b"/>
<path d="M8.6 9H47.0" stroke="#1e1e1e" stroke-width="1.5" fill="none" stroke-dasharray="4 .5 3.4 .6 2.6 .5"/><path d="M51 9.2H76.0" stroke="#8e8e88" stroke-width="0.5" fill="none"/><path d="M8.6 12.4H74.0M8.6 14.8H74.0M8.6 17.2H74.0M8.6 19.6H74.0M8.6 22H68.8" stroke="#84847c" stroke-width="0.55" fill="none"/><path d="M15.6 26.8H65.6" stroke="#84847c" stroke-width="0.55" fill="none"/><path d="M21 29.4H60.0" stroke="#84847c" stroke-width="0.55" fill="none"/>
<ellipse cx="40.8" cy="36.2" rx="8.4" ry="5" fill="#a9c77e"/><ellipse cx="22.4" cy="44.6" rx="10.4" ry="5.2" fill="#a9c77e"/><ellipse cx="63.8" cy="44.6" rx="10.4" ry="5.2" fill="#a9c77e"/>
<path d="M32.6 40.4 L29 41.6 M49 40.4 L55 42" stroke="#7a9a58" stroke-width=".5"/>
<path d="M35.4 33.6H46.2M35.4 35.2H46.2M35.4 36.8H46.2M35.4 38.4H46.2" stroke="#4c6a2e" stroke-width="0.5" fill="none"/><path d="M15.4 42.6H29.4M15.4 44.2H29.4M15.4 45.8H29.4M15.4 47.2H29.4" stroke="#4c6a2e" stroke-width="0.5" fill="none"/><path d="M56.8 42.6H70.8M56.8 44.2H70.8M56.8 45.8H70.8M56.8 47.2H70.8" stroke="#4c6a2e" stroke-width="0.5" fill="none"/>
</svg>
<!-- thumb 7 -->
<div class="t" style="left:5.4px;top:327.8px;font-size:7.6px;color:#555!important">7</div>
<div class="t" style="left:5.6px;top:337.6px;font-size:4.6px;color:#555!important">★</div>
<svg class="a" style="left:12.6px;top:329px" width="79.8" height="22" viewBox="0 0 79.8 22">
<rect width="79.8" height="22" fill="#edf1d9"/><rect width="1.3" height="22" fill="#7a7059"/>
<path d="M.3 4.6 H8.6 L10 7 L8.6 9.4 H.3 Z" fill="#b23a1b"/>
<ellipse cx="17.6" cy="14" rx="11.4" ry="8" fill="#dfe8cf" stroke="#8fa06a" stroke-width=".5"/><ellipse cx="15.4" cy="7.6" rx="9" ry="2.4" fill="#eef0dc" stroke="#b5533a" stroke-width=".4"/>
<ellipse cx="66.6" cy="15" rx="12" ry="8.4" fill="#f4dfca" stroke="#a89a7e" stroke-width=".5"/>
<ellipse cx="40.4" cy="15" rx="15" ry="7" fill="#808e3c"/>
<path d="M33 13.6H46.0" stroke="#2a3210" stroke-width="0.7" fill="none"/><path d="M38 16.4H41.0" stroke="#2a3210" stroke-width="0.7" fill="none"/><path d="M59.6 9.4H70.6M59.6 11H70.6M59.6 12.6H70.6M59.6 14.2H70.6M59.6 15.8H70.6M59.6 17.4H70.6" stroke="#6a4a3a" stroke-width="0.5" fill="none"/><path d="M10 7.6H20.0" stroke="#6a4a3a" stroke-width="0.4" fill="none"/>
</svg>
<!--SLIDE-->
<svg class="a" style="left:234.7px;top:72px;box-shadow:0 0 1.5px rgba(0,0,0,.25)" width="343.2" height="257"><use href="#slide" width="343.2" height="257"/></svg>
<!--STATUS-->
<div class="a" style="left:110px;top:334.1px;width:590px;height:1.4px;background:#d0d0d0"></div>
<div class="t" style="left:116px;top:338.6px;font-size:7.3px;color:#555!important">Заметки к слайду</div>
<div class="a" style="left:700px;top:66px;width:8px;height:285px;background:#e9e9e9"></div>
<div class="a" style="left:700.6px;top:74px;width:6.6px;height:228px;background:#dadada"></div>
<div class="a" style="left:700.6px;top:94.4px;width:6.6px;height:8px;background:#fff;border:.5px solid #c8c8c8"></div>
<svg class="a" style="left:701.4px;top:66px" width="5" height="260" viewBox="0 0 5 260"><path d="M.4 4.2 L2.5 1.8 L4.6 4.2 Z M.4 238.4 L2.5 240.8 L4.6 238.4 Z" fill="#555"/><path d="M.8 247 L2.5 245.4 L4.2 247 M.8 249 L2.5 247.4 L4.2 249 M.8 254 L2.5 255.6 L4.2 254 M.8 256 L2.5 257.6 L4.2 256" stroke="#555" stroke-width=".6" fill="none"/></svg>
<div class="a" style="left:0;top:351px;width:708px;height:10px;background:#f3f3f3;border-top:.6px solid #d6d6d6"></div>
<div class="t" style="left:1.8px;top:354px;font-size:5.2px;color:#555!important">Слайд 4 из 15</div>
<svg class="a" style="left:41.4px;top:352.6px" width="7" height="7" viewBox="0 0 7 7"><path d="M.6 1 h2.6 v4.6 h-2.6 z M3.8 1 h2.2 v4.6 h-2.2 z M4.4 5.6 l.8 1 l1.6 -2" fill="none" stroke="#666" stroke-width=".55"/></svg>
<div class="t" style="left:53px;top:354px;font-size:5px;color:#555!important;letter-spacing:-.12px">английский (США)</div>
<svg class="a" style="left:484px;top:352.6px" width="8" height="7" viewBox="0 0 8 7"><path d="M1 5.6 h6 M4 .8 v3.4 M2.6 2 L4 .6 L5.4 2" fill="none" stroke="#666" stroke-width=".6"/></svg>
<div class="t" style="left:492.6px;top:354.2px;font-size:4.9px;color:#444!important;letter-spacing:-.1px">Заметки</div>
<svg class="a" style="left:516.6px;top:352.6px" width="8" height="7" viewBox="0 0 8 7"><path d="M.8 .8 h6.2 v3.8 h-3.4 l-1.6 1.6 v-1.6 h-1.2 z" fill="#555"/></svg>
<div class="t" style="left:525px;top:354.2px;font-size:4.9px;color:#444!important;letter-spacing:-.1px">Примечания</div>
<div class="a" style="left:561px;top:351.6px;width:13.6px;height:9.4px;background:#d2d2d2"></div>
<svg class="a" style="left:561px;top:351.6px" width="150" height="9.4" viewBox="0 0 150 9.4" fill="none" stroke="#666" stroke-width=".55">
<rect x="4.4" y="2.4" width="5" height="4.6"/><path d="M4.4 4.7 h5 M6 2.4 v4.6"/>
<rect x="19.6" y="2.6" width="1.8" height="1.6"/><rect x="22.4" y="2.6" width="1.8" height="1.6"/><rect x="19.6" y="5.2" width="1.8" height="1.6"/><rect x="22.4" y="5.2" width="1.8" height="1.6"/>
<path d="M34 2.4 h5 v4.4 h-5 z M36.4 2.4 v4.4 M37.2 3.6 h1.2 M37.2 4.8 h1.2"/>
<path d="M49.6 2.4 h5 v2.6 h-5 z M52.1 5 v1.4 M50.8 7 L52.1 5.8 L53.4 7"/>
<path d="M62 4.8 h2.4" stroke="#444" stroke-width=".7"/><path d="M67 4.8 h45" stroke="#9a9a9a" stroke-width=".5"/><rect x="83.4" y="2.4" width="1.2" height="4.8" fill="#444" stroke="none"/><path d="M114 4.8 h3 M115.5 3.3 v3" stroke="#444" stroke-width=".7"/>
<path d="M139.6 2.6 h5 v4.6 h-5 z M140.6 3.6 l.9 .9 M143.6 3.6 l-.9 .9 M140.6 6.2 l.9 -.9 M143.6 6.2 l-.9 -.9"/>
</svg>
<div class="t" style="left:685px;top:354.4px;font-size:4.6px;color:#444!important">78%</div>
</div>

<!--PARTICIPANTS-->
<div class="a" style="left:714px;top:245px;width:4.2px;height:16px;border-radius:1.2px;background:#6c6c6c;border:.8px solid #a2a2a2"></div>
<style>.tile{left:762.6px;width:94px;background:#242424;overflow:hidden}</style>
<!-- tile1 -->
<div class="a" style="left:760px;top:55.8px;width:99.4px;height:58px;background:linear-gradient(90deg,#b4e636,#dcee50 12%,#d6ec4c);border-radius:1px"></div>
<svg class="a" style="left:762.8px;top:58.4px" width="93.8" height="52.6" viewBox="0 0 93.8 52.6">
<defs><linearGradient id="w1" x1="0" y1="0" x2="1" y2="0"><stop offset="0" stop-color="#b0aca8"/><stop offset=".4" stop-color="#a09c98"/><stop offset="1" stop-color="#8a8682"/></linearGradient><filter id="pb"><feGaussianBlur stdDeviation=".7"/></filter></defs>
<rect width="93.8" height="52.6" fill="url(#w1)"/>
<g filter="url(#pb)">
<path d="M.4 0 H3.8 L3 52.6 H0 Z" fill="#f2f2f0"/>
<rect x="12.2" y="0.6" width="13.4" height="14.5" fill="#5a4a42" /><rect x="14.2" y="2.6" width="9.4" height="10.5" fill="#8a7e76" /><rect x="29.2" y="8.8" width="7.8" height="10.1" fill="#7c7670" /><rect x="23.7" y="22.6" width="6.3" height="7.7" fill="#6a4a42" /><rect x="32.5" y="26.6" width="5.1" height="10.0" fill="#4e4844" />
<path d="M17 22.4 h5.4 l2 9 h-9.4 z" fill="#ecebe6"/><rect x="19" y="31.4" width="1.6" height="5" fill="#6a665f"/>
<rect x="0.2" y="35.6" width="39.0" height="17.0" fill="#4e4843" /><rect x="3.2" y="27.6" width="6.0" height="9.0" fill="#6a625c" /><rect x="77.5" y="27.1" width="13.9" height="12.1" fill="#4a4845" /><rect x="79.5" y="29.1" width="9.9" height="8.1" fill="#8a8682" /><rect x="79.2" y="39.6" width="9.0" height="13.0" fill="#6c6864" />
<path d="M37.6 22 C36.6 6 46 -4 58 -4 C72 -4 80 6 77.6 24 C77 32 74 37 71 30 L44 28 C41 34 38 30 37.6 22 Z" fill="#9c5c3a"/>
<path d="M40 16 C43 7 58 4 69 12 C74 20 74 31 69 38 C63 45 51 45 45.6 40 C40 35 38 25 40 16 Z" fill="#c4846c"/>
<path d="M38 13 C46 2 66 0 77 13 C69 8 52 8 44 15 Z" fill="#a8683f"/>
<path d="M40 20 h13 v6 h-13 z M57 21 h14 v6.4 h-14 z M53 22.4 h4" fill="none" stroke="#8a7a7a" stroke-width=".9"/>
<rect x="41" y="21" width="11" height="4" fill="#b9a8ac" opacity=".6"/><rect x="58" y="22" width="12" height="4.4" fill="#c4b6bc" opacity=".7"/>
<path d="M50 36 h8" stroke="#a8625a" stroke-width="1.1"/>
<path d="M44 42 C54 48 70 44 78 38 L93.8 42 V52.6 H40 Z" fill="#bfa09c"/>
</g>
</svg>
<div class="a" style="left:762.8px;top:101.4px;width:72px;height:9.6px;background:rgba(24,24,24,.7);border-radius:1.5px"></div>
<div class="t" style="left:765.7px;top:102.4px;font-size:7.5px;color:#f4f4f4">Антонина Конончук</div>
<!-- tile2 -->
<div class="a tile" style="top:116.6px;height:50px"></div>
<svg class="a" style="left:785.8px;top:116.6px" width="47.4" height="40" viewBox="0 0 47.4 40">
<rect width="47.4" height="40" fill="#e6b044"/><rect x="0" y="0" width="9" height="40" fill="#a89a72"/>
<g filter="url(#pb)"><path d="M30 3 h14 M34 8 h11 M38 13 h8 M40 18 h7 M40 23 h7" stroke="#d8731e" stroke-width="2.4"/>
<path d="M2 40 C0 24 3 8 17 3.6 C31 0 44 9 43.6 24 C43.6 31 42 36 42 40 Z" fill="#2b1d1b"/>
<path d="M12.6 25 C11.6 16 16 12 23.6 12.6 C31 12.6 35 19 33 27.6 C31 35 27 38.6 22.6 38.6 C17 38.6 13.6 33 12.6 25 Z" fill="#cf9a80"/>
<path d="M9 24 C10 10 26 7 36 19 C29 14.6 20 14 13.6 21 Z" fill="#2b1d1b"/>
<path d="M17.6 30.6 C20.6 33.6 25.6 33.6 28.6 30.6 C26 32 20 32 17.6 30.6 Z" fill="#fff" stroke="#a8554a" stroke-width=".6"/>
<path d="M15.6 23 h4.4 M25 23 h4.4" stroke="#3a2622" stroke-width="1.3"/>
<path d="M8 40 C12 36.6 18 37.6 22.6 39 C28 37.6 34 36.6 39 40 Z" fill="#3a2a28"/></g>
</svg>
<div class="a" style="left:762.6px;top:156.6px;width:80.4px;height:10px;background:rgba(24,24,24,.72);border-radius:1.5px"></div><svg class="a" style="left:764.0px;top:157.2px" width="9" height="9" viewBox="0 0 18 18"><rect x="6" y="1.2" width="6" height="9.6" rx="3" fill="#ea3d34"/><path d="M3.4 8.4 C3.4 15 14.6 15 14.6 8.4 M9 13.4 V16.6 M5.6 16.8 H12.4" stroke="#ea3d34" stroke-width="1.9" fill="none"/><path d="M2.2 17 L15.8 1.2" stroke="#ea3d34" stroke-width="2.2"/></svg><div class="t" style="left:775.9px;top:158.1px;font-size:7.05px;color:#f4f4f4">Наталія Островська</div>
<!-- tile3 -->
<svg class="a" style="left:762.6px;top:170.4px" width="93.8" height="53.2" viewBox="0 0 93.8 53.2">
<defs><linearGradient id="w3" x1="0" y1="0" x2="1" y2="1"><stop offset="0" stop-color="#a9b9c8"/><stop offset=".5" stop-color="#92a4b6"/><stop offset="1" stop-color="#7c8ea0"/></linearGradient></defs>
<rect width="93.8" height="53.2" fill="url(#w3)"/>
<g filter="url(#pb)">
<polygon points="0.0,0.0 34.4,0.0 0.0,15.6" fill="#e9e9e6"/>
<polygon points="17.9,19.6 39.9,12.6 42.2,31.7 17.9,36.9" fill="#866636"/>
<polygon points="19.7,21.0 38.3,15.0 40.2,30.2 19.7,34.6" fill="#d9c9a4"/>
<polygon points="19.7,28.6 39.8,25.2 40.2,30.2 19.7,34.6" fill="#8fa89e"/>
<rect x="5.2" y="21.3" width="4.1" height="6.9" fill="#a8683a"/>
<polygon points="80.4,0.0 93.8,0.0 93.8,13.6 80.4,11.6" fill="#3a3c34"/>
<polygon points="78.4,11.6 93.8,13.6 93.8,35.6 82.4,33.6" fill="#46668a"/>
<path d="M82 18 L93 30 M84 12 L93 20" stroke="#2c3a4c" stroke-width="1"/>
<path d="M30 53.2 C32 46 40 42 50 41.6 L74 38 C84 38 90 42 93.8 46 V53.2 Z" fill="#463a2e"/>
<polygon points="46.3,21.6 51.4,17.6 73.4,17.6 78.1,25.6 76.9,35.6 71.4,42.0 55.4,42.0 48.4,35.6" fill="#d9b9ad"/>
<polygon points="39.3,12.6 50.9,4.5 69.4,4.0 80.4,10.3 78.6,20.7 69.4,17.3 51.4,19.6 47.0,26.6 45.1,33.0 39.9,25.3" fill="#b7ab9c"/>
<polygon points="43.4,10.6 53.4,6.0 67.4,6.0 75.4,10.6 63.4,9.6 49.4,13.6" fill="#cfc6ba"/>
<path d="M56 23 h20" stroke="#5a5250" stroke-width="1"/>
<path d="M73 33 h5" stroke="#b48a82" stroke-width="1"/>
</g>
</svg>
<div class="a" style="left:762.6px;top:212.6px;width:83.4px;height:11px;background:rgba(24,24,24,.72);border-radius:1.5px"></div><svg class="a" style="left:764.2px;top:213.6px" width="9" height="9" viewBox="0 0 18 18"><rect x="6" y="1.2" width="6" height="9.6" rx="3" fill="#ea3d34"/><path d="M3.4 8.4 C3.4 15 14.6 15 14.6 8.4 M9 13.4 V16.6 M5.6 16.8 H12.4" stroke="#ea3d34" stroke-width="1.9" fill="none"/><path d="M2.2 17 L15.8 1.2" stroke="#ea3d34" stroke-width="2.2"/></svg>
<div class="t" style="left:775.9px;top:214.7px;font-size:7.05px;color:#f4f4f4">Оксана Михайленко</div>
<!-- tile4 -->
<svg class="a" style="left:762.6px;top:226.9px" width="93.8" height="52.6" viewBox="0 0 93.8 52.6">
<defs><linearGradient id="w4" x1="0" y1="0" x2="1" y2="0"><stop offset="0" stop-color="#e9e6d2"/><stop offset="1" stop-color="#f5f3e8"/></linearGradient></defs>
<rect width="93.8" height="52.6" fill="url(#w4)"/>
<g filter="url(#pb)">
<rect x="27.2" y="6.8" width="2.3" height="15.2" fill="#1e1e22"/><rect x="29.6" y="7.2" width="2.3" height="14.8" fill="#d8b02a"/><rect x="32.1" y="6.9" width="2.3" height="15.1" fill="#d8b02a"/><rect x="34.6" y="7.2" width="2.3" height="14.8" fill="#2a7a8a"/><rect x="37.0" y="7.3" width="2.3" height="14.7" fill="#2a7a8a"/><rect x="39.5" y="6.6" width="2.3" height="15.4" fill="#c89a2a"/><rect x="41.9" y="6.5" width="2.3" height="15.5" fill="#1e1e22"/><rect x="44.4" y="7.5" width="2.3" height="14.5" fill="#caa02a"/><rect x="67.0" y="6.8" width="2.1" height="15.2" fill="#8a2a3a"/><rect x="69.2" y="6.8" width="2.1" height="15.2" fill="#f0f0ea"/><rect x="71.4" y="7.7" width="2.1" height="14.3" fill="#f0f0ea"/><rect x="73.6" y="7.1" width="2.1" height="14.9" fill="#1e1e22"/><rect x="75.8" y="7.5" width="2.1" height="14.5" fill="#e8e6dc"/><rect x="78.0" y="7.1" width="2.1" height="14.9" fill="#1e1e22"/><rect x="80.2" y="7.3" width="2.1" height="14.7" fill="#b8c828"/><rect x="82.4" y="6.7" width="2.1" height="15.3" fill="#b8c828"/><rect x="84.6" y="7.3" width="2.1" height="14.7" fill="#1e1e22"/><rect x="24.3" y="22.0" width="67.1" height="2.8" fill="#fbfbf7"/><rect x="22.8" y="29.2" width="2.0" height="10.7" fill="#f0f0ea"/><rect x="24.9" y="28.7" width="2.0" height="11.2" fill="#d87a9a"/><rect x="27.0" y="29.0" width="2.0" height="10.9" fill="#d87a9a"/><rect x="29.2" y="28.9" width="2.0" height="11.0" fill="#1e1e22"/><rect x="31.3" y="28.0" width="2.0" height="11.9" fill="#1e1e22"/><rect x="33.4" y="29.0" width="2.0" height="10.9" fill="#e8e6dc"/><rect x="35.5" y="28.8" width="2.0" height="11.1" fill="#2a4a7a"/><rect x="37.6" y="28.4" width="2.0" height="11.5" fill="#e8e6dc"/><rect x="39.8" y="27.9" width="2.0" height="12.0" fill="#b8c828"/><rect x="41.9" y="29.2" width="2.0" height="10.7" fill="#b8c828"/><rect x="44.0" y="28.6" width="2.0" height="11.3" fill="#1e1e22"/><rect x="63.6" y="27.7" width="2.8" height="8.7" fill="#2a4a8a"/><rect x="66.6" y="28.5" width="2.8" height="7.9" fill="#1e1e22"/>
<path d="M8 10 L16 26 M11 12 L17 26 M20 9 L18 26 M22 12 L19 26 M6 16 L15 26 M14 10 L17 24" stroke="#5a8a6a" stroke-width="1" fill="none"/>
<path d="M5 14 C8 17 11 19 13 22 M21 16 C22 19 22 22 21 25" stroke="#6a9a74" stroke-width="1.4" fill="none"/>
<circle cx="7.6" cy="10.4" r="2.6" fill="#c8487a"/><circle cx="11" cy="9" r="2" fill="#d8608a"/><circle cx="20.4" cy="9.4" r="2" fill="#c8487a"/><circle cx="14.6" cy="11" r="1.6" fill="#b84a70"/><circle cx="22.6" cy="13" r="1.5" fill="#d06a8a"/>
<rect x="12.7" y="26.6" width="8.7" height="14.5" fill="#28a8d8"/><rect x="0.0" y="36.4" width="12.7" height="6.7" fill="#5a2c2c"/>
<path d="M30 52.6 C31 42 42 37 52 36.4 C66 36 82 40 87 52.6 Z" fill="#baa292"/>
<path d="M44.6 18 C44 8 52 5.4 57 5.8 C64 6.4 68 12 67.2 22 C67 30 65 33 61 33 L49 31 C45.6 28 44.8 23 44.6 18 Z" fill="#3a2c28"/>
<path d="M47.6 19 C47.4 12.4 52 9.6 56 9.8 C61.4 10 65 14 64.6 22 C64.4 30 60.6 35.6 56 35.6 C51 35.4 47.8 28 47.6 19 Z" fill="#b98b78"/>
<path d="M60.8 32.6 C62.6 38 63.6 46 63 52.6 H66 C66.6 46 65.8 38 64.2 32 Z" fill="#2c201c"/>
<path d="M50.6 21 h3.6 M58.4 21 h3.6" stroke="#4a3630" stroke-width=".9"/><path d="M53.6 29.4 h5" stroke="#9a5a50" stroke-width=".9"/>
</g>
</svg>
<div class="a" style="left:762.6px;top:268.6px;width:56.8px;height:10.9px;background:rgba(24,24,24,.72);border-radius:1.5px"></div><svg class="a" style="left:764.2px;top:269.6px" width="9" height="9" viewBox="0 0 18 18"><rect x="6" y="1.2" width="6" height="9.6" rx="3" fill="#ea3d34"/><path d="M3.4 8.4 C3.4 15 14.6 15 14.6 8.4 M9 13.4 V16.6 M5.6 16.8 H12.4" stroke="#ea3d34" stroke-width="1.9" fill="none"/><path d="M2.2 17 L15.8 1.2" stroke="#ea3d34" stroke-width="2.2"/></svg>
<div class="t" style="left:776.8px;top:270.6px;font-size:7.05px;color:#f4f4f4">Лариса Рень</div>
<!-- tile5 -->
<div class="a tile" style="top:282.8px;height:53px"></div>
<div class="a" style="left:786.3px;top:285.2px;width:47px;height:43.6px;background:#f4770f"></div>
<div class="t" style="left:800.4px;top:295.4px;font-size:27.4px;color:#fff">C</div>
<div class="a" style="left:762.6px;top:325.4px;width:71px;height:10px;background:rgba(24,24,24,.72);border-radius:1.5px"></div><svg class="a" style="left:764.0px;top:326.0px" width="9" height="9" viewBox="0 0 18 18"><rect x="6" y="1.2" width="6" height="9.6" rx="3" fill="#ea3d34"/><path d="M3.4 8.4 C3.4 15 14.6 15 14.6 8.4 M9 13.4 V16.6 M5.6 16.8 H12.4" stroke="#ea3d34" stroke-width="1.9" fill="none"/><path d="M2.2 17 L15.8 1.2" stroke="#ea3d34" stroke-width="2.2"/></svg><div class="t" style="left:776.3px;top:326.9px;font-size:7.05px;color:#f4f4f4">Тамара Василюк</div>
<!-- tile6 -->
<div class="a tile" style="top:339.3px;height:52.2px"></div>
<div class="t" style="left:765.7px;top:360.6px;font-size:10.1px;font-weight:bold;color:#fff">Анастасія Нико...</div>
<div class="a" style="left:762.6px;top:381.8px;width:86.6px;height:10px;background:rgba(24,24,24,.72);border-radius:1.5px"></div><svg class="a" style="left:764.0px;top:382.40000000000003px" width="9" height="9" viewBox="0 0 18 18"><rect x="6" y="1.2" width="6" height="9.6" rx="3" fill="#ea3d34"/><path d="M3.4 8.4 C3.4 15 14.6 15 14.6 8.4 M9 13.4 V16.6 M5.6 16.8 H12.4" stroke="#ea3d34" stroke-width="1.9" fill="none"/><path d="M2.2 17 L15.8 1.2" stroke="#ea3d34" stroke-width="2.2"/></svg><div class="t" style="left:776.3px;top:383.3px;font-size:7.05px;color:#f4f4f4">Анастасія Николенко</div>
<!-- tile7 -->
<svg class="a" style="left:762.7px;top:395.3px" width="94.3" height="53.4" viewBox="0 0 94.3 53.4">
<defs><linearGradient id="w7" x1="0" y1="0" x2="1" y2="0"><stop offset="0" stop-color="#3a1e12"/><stop offset=".56" stop-color="#40261a"/><stop offset=".62" stop-color="#5e5a58"/><stop offset="1" stop-color="#7e7a78"/></linearGradient>
<linearGradient id="sk7" x1="0" y1="0" x2="1" y2="0"><stop offset="0" stop-color="#7aa4e8"/><stop offset=".5" stop-color="#eef4fc"/><stop offset="1" stop-color="#86aeea"/></linearGradient>
<linearGradient id="sk8" x1="0" y1="0" x2="0" y2="1"><stop offset="0" stop-color="#4f82de"/><stop offset="1" stop-color="#a4c4f0"/></linearGradient></defs>
<rect width="94.3" height="53.4" fill="#3c3c42"/>
<g filter="url(#pb)">
<rect x="36.3" y="0.9" width="57.5" height="7.1" fill="url(#sk7)" /><rect x="36.3" y="13.1" width="28.4" height="23.6" fill="url(#sk7)" /><rect x="72.4" y="13.1" width="21.9" height="40.3" fill="url(#sk8)" />
<rect x="41.7" y="0.7" width="1.6" height="36.0" fill="#44444c" /><rect x="48.5" y="0.7" width="2.0" height="36.0" fill="#44444c" /><rect x="71.7" y="0.7" width="1.6" height="8.0" fill="#44444c" /><rect x="79.9" y="0.7" width="1.8" height="8.0" fill="#44444c" /><rect x="88.1" y="0.7" width="1.8" height="8.0" fill="#44444c" />
<rect x="73.8" y="32.3" width="20.5" height="6.6" fill="#c9403c" /><rect x="73.8" y="38.9" width="20.5" height="14.5" fill="#f0e2d4" /><rect x="76.3" y="45.7" width="7.0" height="7.7" fill="#e8a684" /><rect x="85.3" y="45.1" width="4.6" height="7.2" fill="#4a4e58" />
<rect x="76.7" y="13.1" width="1.4" height="40.3" fill="#5a5e6a" opacity=".8"/><rect x="84.3" y="13.1" width="1.4" height="40.3" fill="#5a5e6a" opacity=".8"/><rect x="91.3" y="13.1" width="1.4" height="40.3" fill="#5a5e6a" opacity=".8"/>
<rect x="0.0" y="0.0" width="35.9" height="53.4" fill="url(#w7)" />
<path d="M35.6 53.4 C35.6 40 44 31.4 54 31 C64 31 72 40 71.4 53.4 Z" fill="#1a1a1e"/>
</g>
</svg>
<div class="a" style="left:762.7px;top:437.8px;width:53.4px;height:10.9px;background:rgba(24,24,24,.72);border-radius:1.5px"></div><svg class="a" style="left:764.2px;top:438.8px" width="9" height="9" viewBox="0 0 18 18"><rect x="6" y="1.2" width="6" height="9.6" rx="3" fill="#ea3d34"/><path d="M3.4 8.4 C3.4 15 14.6 15 14.6 8.4 M9 13.4 V16.6 M5.6 16.8 H12.4" stroke="#ea3d34" stroke-width="1.9" fill="none"/><path d="M2.2 17 L15.8 1.2" stroke="#ea3d34" stroke-width="2.2"/></svg>
<div class="t" style="left:775.9px;top:439.9px;font-size:7.05px;color:#f4f4f4">Зоя Зленко</div>
<div class="a" style="left:787.7px;top:452.6px;width:43.2px;height:18.2px;background:#2b2b2b;border-radius:1.5px"></div>
<svg class="a" style="left:804.5px;top:458.6px" width="10" height="6" viewBox="0 0 10 6"><path d="M1 1 L5 4.8 L9 1" fill="none" stroke="#f0f0f0" stroke-width="1.1"/></svg>
<!--TOOLBAR-->
<!-- pen -->
<div class="a" style="left:10.9px;top:414.1px;width:23px;height:23px;border-radius:50%;background:#20262e;box-shadow:0 0 2px rgba(0,0,0,.5)"></div>
<svg class="a" style="left:16.4px;top:419.6px" width="12" height="12" viewBox="0 0 12 12"><path d="M2 10 L2.6 7.4 L8.2 1.8 C9 1 10.8 2.8 10 3.6 L4.4 9.2 Z M7.2 2.8 L9 4.6" fill="none" stroke="#23d959" stroke-width="1.1" stroke-linejoin="round"/></svg>
<svg class="a" style="left:109.6px;top:419.4px" width="6" height="9" viewBox="0 0 6 9"><path d="M.6 .6 V7.2 L2.2 5.8 L3.4 8.4 L4.4 8 L3.2 5.4 L5.2 5.2 Z" fill="#fff" stroke="#222" stroke-width=".6"/></svg>
<!-- mic -->
<svg class="a" style="left:23px;top:476px" width="16" height="17" viewBox="0 0 16 17"><rect x="5.4" y="2" width="4.8" height="8.4" rx="2.4" fill="#9a9a9a"/><path d="M3.4 8 C3.4 13.4 12.2 13.4 12.2 8 M7.8 12.2 V15 M5.4 15.2 H10.2" stroke="#9a9a9a" stroke-width="1.1" fill="none"/><path d="M1.6 15 L14.4 1.2" stroke="#e8433a" stroke-width="1.1"/></svg>
<svg class="a" style="left:49.6px;top:483.4px" width="6" height="4" viewBox="0 0 6 4"><path d="M.6 3.4 L3 1 L5.4 3.4" fill="none" stroke="#d8d8d8" stroke-width=".9"/></svg><div class="t" style="left:6px;top:496.8px;font-size:7.1px;color:#e4e4e4;">Включить звук</div>
<svg class="a" style="left:86px;top:477px" width="18" height="16" viewBox="0 0 18 16"><rect x="1.8" y="4" width="10.6" height="9.6" rx="2" fill="#9a9a9a"/><path d="M13.2 7.4 L16.6 5 V12.6 L13.2 10.2 Z" fill="#9a9a9a"/><path d="M1.4 15 L16.4 1.2" stroke="#e8433a" stroke-width="1.1"/></svg>
<svg class="a" style="left:118.6px;top:483.4px" width="6" height="4" viewBox="0 0 6 4"><path d="M.6 3.4 L3 1 L5.4 3.4" fill="none" stroke="#d8d8d8" stroke-width=".9"/></svg><div class="t" style="left:72px;top:496.8px;font-size:7.1px;color:#e4e4e4;">Начать видео</div>
<svg class="a" style="left:236px;top:479px" width="16" height="12" viewBox="0 0 16 12"><circle cx="5.4" cy="3.4" r="2.7" fill="#d4d4d4"/><path d="M.6 11.4 C.6 7.6 2.6 6.8 5.4 6.8 C8.2 6.8 10.2 7.6 10.2 11.4 Z" fill="#d4d4d4"/><circle cx="11.6" cy="3.8" r="2.2" fill="#d4d4d4"/><path d="M11 11.4 C11 9 10.6 7.8 9.8 7 C13 6.4 15.4 7.4 15.4 11.4 Z" fill="#d4d4d4"/></svg>
<div class="t" style="left:253.4px;top:480.8px;font-size:6.4px;color:#e4e4e4">101</div>
<svg class="a" style="left:271.4px;top:483.4px" width="6" height="4" viewBox="0 0 6 4"><path d="M.6 3.4 L3 1 L5.4 3.4" fill="none" stroke="#d8d8d8" stroke-width=".9"/></svg><div class="t" style="left:226.7px;top:496.8px;font-size:7.1px;color:#e4e4e4;">Участники</div>
<svg class="a" style="left:302px;top:479.2px" width="13" height="12.4" viewBox="0 0 13 12.4"><path d="M2 .6 H11 Q12.6 .6 12.6 2.2 V7.4 Q12.6 9 11 9 H6.4 L3.4 11.8 V9 H2 Q.4 9 .4 7.4 V2.2 Q.4 .6 2 .6 Z" fill="#cfcfcf"/></svg>
<svg class="a" style="left:324.3px;top:483.4px" width="6" height="4" viewBox="0 0 6 4"><path d="M.6 3.4 L3 1 L5.4 3.4" fill="none" stroke="#d8d8d8" stroke-width=".9"/></svg><div class="t" style="left:303px;top:496.8px;font-size:7.1px;color:#e4e4e4;">Чат</div>
<div class="a" style="left:369.3px;top:479.8px;width:14.8px;height:10.8px;border-radius:2px;background:#23d959"></div>
<svg class="a" style="left:373.4px;top:481.6px" width="7" height="7.4" viewBox="0 0 7 7.4"><path d="M3.5 .6 L6.4 3.8 H4.4 V7 H2.6 V3.8 H.6 Z" fill="#14301c"/></svg>
<div class="t" style="left:340px;top:496.8px;font-size:7.1px;color:#23d959;">Демонстрация экрана</div>
<svg class="a" style="left:435.6px;top:479px" width="13" height="13" viewBox="0 0 13 13"><circle cx="6.5" cy="6.5" r="5.6" fill="none" stroke="#d4d4d4" stroke-width="1"/><circle cx="6.5" cy="6.5" r="3.7" fill="#bdbdbd"/></svg>
<div class="t" style="left:430px;top:496.8px;font-size:7.1px;color:#e4e4e4;">Запись</div>
<div class="a" style="left:493.3px;top:480px;width:15.2px;height:10.6px;border-radius:2px;background:#c9c9c9"></div>
<div class="t" style="left:496.2px;top:482.4px;font-size:6px;font-weight:bold;color:#2a2a2a;letter-spacing:.2px">CC</div>
<svg class="a" style="left:526.6px;top:483.4px" width="6" height="4" viewBox="0 0 6 4"><path d="M.6 3.4 L3 1 L5.4 3.4" fill="none" stroke="#d8d8d8" stroke-width=".9"/></svg><div class="t" style="left:470px;top:496.8px;font-size:7.1px;color:#e4e4e4;">Показать субтитры</div>
<svg class="a" style="left:554px;top:477.6px" width="15" height="14" viewBox="0 0 15 14"><circle cx="6" cy="8" r="4.9" fill="#d4d4d4"/><circle cx="4.4" cy="7" r=".8" fill="#222"/><circle cx="7.6" cy="7" r=".8" fill="#222"/><path d="M3.6 9 C4.6 10.8 7.4 10.8 8.4 9" fill="none" stroke="#222" stroke-width=".8"/><path d="M11.6 .6 L12.3 2.7 L14.4 3.4 L12.3 4.1 L11.6 6.2 L10.9 4.1 L8.8 3.4 L10.9 2.7 Z" fill="#d4d4d4" stroke="#1b1b1b" stroke-width=".5"/></svg>
<svg class="a" style="left:573.8px;top:483.4px" width="6" height="4" viewBox="0 0 6 4"><path d="M.6 3.4 L3 1 L5.4 3.4" fill="none" stroke="#d8d8d8" stroke-width=".9"/></svg><div class="t" style="left:546.7px;top:496.8px;font-size:7.1px;color:#e4e4e4;">Реакции</div>
<svg class="a" style="left:605px;top:480.4px" width="11" height="11" viewBox="0 0 11 11" fill="none" stroke="#d8d8d8" stroke-width="1.1"><path d="M.8 4 V2.4 Q.8 .8 2.4 .8 H4 M.8 7 V8.6 Q.8 10.2 2.4 10.2 H4 M10.2 7 V8.6 Q10.2 10.2 8.6 10.2 H7"/><circle cx="8.4" cy="2.6" r="1.7"/></svg>
<div class="t" style="left:588.8px;top:496.8px;font-size:7.1px;color:#e4e4e4;">Приложения</div>
<svg class="a" style="left:665px;top:479.6px" width="14" height="11.4" viewBox="0 0 14 11.4" fill="none" stroke="#d8d8d8" stroke-width="1.1"><rect x="1" y=".8" width="11.6" height="8.4" rx="1.6"/><rect x="6.6" y="7.6" width="6" height="2.4" rx=".8" fill="#d8d8d8" stroke="#1b1b1b" stroke-width=".6"/></svg>
<div class="t" style="left:641.3px;top:496.8px;font-size:7.1px;color:#e4e4e4;">Доски сообщений</div>
<svg class="a" style="left:729.6px;top:479.6px" width="12" height="13" viewBox="0 0 12 13" fill="none" stroke="#d8d8d8" stroke-width="1"><path d="M2.6 2.6 V9.6 H8.6 M2.6 2.6 Q2.6 .8 4.4 .8 H10 V8"/><path d="M1 4 V11.4 H7" stroke-width=".9"/><path d="M5 3.6 H8 M5 5.6 H7"/><rect x="6" y="9.4" width="5.4" height="2.4" rx=".8" fill="#d8d8d8" stroke="#1b1b1b" stroke-width=".5"/></svg>
<div class="t" style="left:714.7px;top:496.8px;font-size:7.1px;color:#e4e4e4;">Примечания</div>
<div class="a" style="left:856.5px;top:482.6px;width:36.8px;height:15.8px;border-radius:4px;background:#cc2b2b"></div>
<div class="t" style="left:864px;top:487.2px;font-size:6.7px;font-weight:bold;color:#fff">Выйти</div>
</body>
</html>
